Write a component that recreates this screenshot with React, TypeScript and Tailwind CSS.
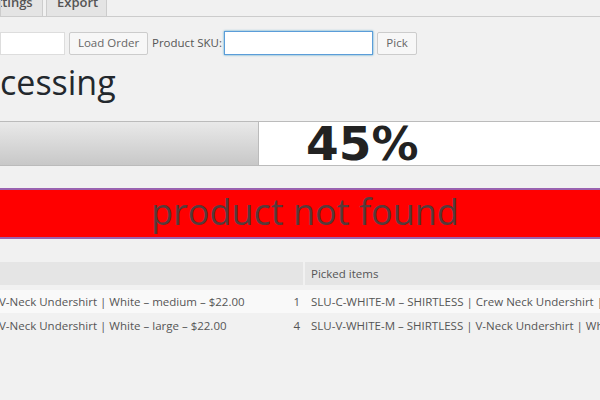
import React from 'react';

const sans = { fontFamily: '"Open Sans", "Noto Sans", sans-serif' };

const rows = [
  {
    item: 'V-Neck Undershirt | White – medium – $22.00',
    qty: '1',
    picked: 'SLU-C-WHITE-M – SHIRTLESS | Crew Neck Undershirt | White – medium',
  },
  {
    item: 'V-Neck Undershirt | White – large – $22.00',
    qty: '4',
    picked: 'SLU-V-WHITE-M – SHIRTLESS | V-Neck Undershirt | White – medium',
  },
];

const App: React.FC = () => {
  return (
    <div className="w-[600px] h-[400px] overflow-hidden bg-[#f1f1f1] text-[#444]" style={sans}>
      {/* tabs */}
      <div className="h-[17px] border-b border-[#ccc] flex items-end gap-[3px]">
        <div className="h-[17px] w-[43px] bg-[#e4e4e4] border border-b-0 border-[#ccc] overflow-hidden">
          <div className="text-[13px] font-semibold text-[#555] leading-none -mt-[4px] -ml-[4px]">ttings</div>
        </div>
        <div className="h-[17px] w-[61px] bg-[#e4e4e4] border border-b-0 border-[#ccc] overflow-hidden">
          <div className="text-[13px] font-semibold text-[#555] leading-none -mt-[4px] pl-[10px]">Export</div>
        </div>
      </div>

      {/* order / sku row */}
      <div className="flex items-center mt-[14px] h-[24px] text-[11.5px]">
        <input className="w-[65px] h-[23px] bg-white border border-[#ddd] outline-none" readOnly />
        <button className="ml-[4px] w-[79px] h-[23px] bg-[#f7f7f7] border border-[#ccc] rounded-[2px] text-[#666]">
          Load Order
        </button>
        <span className="ml-[4px] text-[#555] w-[68px] whitespace-nowrap">Product SKU:</span>
        <input className="ml-[4px] w-[149px] h-[24px] bg-white border border-[#5b9dd9] shadow-[0_0_2px_rgba(30,140,190,0.8)] outline-none" readOnly />
        <button className="ml-[4px] w-[40px] h-[23px] bg-[#f7f7f7] border border-[#ccc] rounded-[2px] text-[#666]">
          Pick
        </button>
      </div>

      {/* heading */}
      <h1 className="text-[34px] leading-[40px] mt-[7px] text-[#23282d] font-normal">cessing</h1>

      {/* progress */}
      <div className="mt-[19px] h-[45px] flex border-y border-[#bbb]">
        <div className="w-[259px] bg-gradient-to-b from-[#e9e9e9] to-[#c8c8c8] border-r border-[#bbb]" />
        <div className="flex-1 bg-white pl-[47px] flex items-center">
          <span
            className="text-[47px] font-bold text-[#222] leading-none"
            style={{ fontFamily: '"DejaVu Sans", Verdana, sans-serif' }}
          >
            45%
          </span>
        </div>
      </div>

      {/* error */}
      <div className="mt-[22px] h-[51px] bg-[#ff0000] border-y-2 border-[#9a62b0] flex items-center justify-center pl-[10px]">
        <span className="text-[36px] leading-none text-[#553b3b] -mt-[3px]">product not found</span>
      </div>

      {/* table */}
      <div className="mt-[23px] text-[11.5px]">
        <div className="flex h-[23px] gap-[2px]">
          <div className="w-[303px] shrink-0 bg-[#e5e5e5]" />
          <div className="flex-1 bg-[#e5e5e5] pl-[6px] flex items-center text-[#555] whitespace-nowrap">Picked items</div>
        </div>
        <div className="mt-[5px]">
          {rows.map((r, i) => (
            <div
              key={i}
              className={`flex h-[23px] items-center whitespace-nowrap text-[#555] ${i === 0 ? 'bg-[#f9f9f9]' : 'mt-[1px]'}`}
            >
              <div className="w-[303px] shrink-0 flex justify-between pr-[2px] -ml-[1px]">
                <span>{r.item}</span>
                <span>{r.qty}</span>
              </div>
              <div className="pl-[9px] min-w-0 overflow-hidden">{r.picked}</div>
            </div>
          ))}
        </div>
      </div>
    </div>
  );
};

export default App;
